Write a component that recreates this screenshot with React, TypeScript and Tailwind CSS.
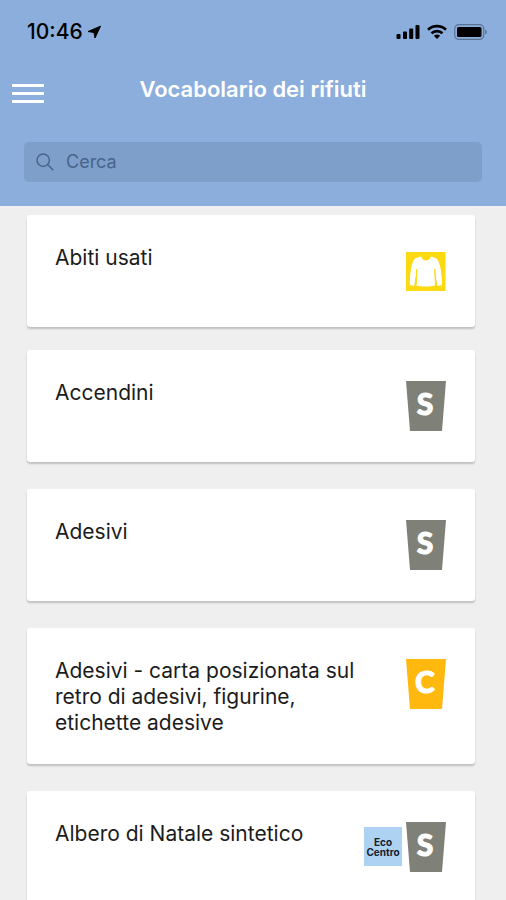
import type { ReactNode } from 'react'

type Marker = 'clothes' | 'dry' | 'paper' | 'ecocenter'

interface WasteItem {
  name: string
  markers: Marker[]
}

const items: WasteItem[] = [
  { name: 'Abiti usati', markers: ['clothes'] },
  { name: 'Accendini', markers: ['dry'] },
  { name: 'Adesivi', markers: ['dry'] },
  { name: 'Adesivi - carta posizionata sul retro di adesivi, figurine, etichette adesive', markers: ['paper'] },
  { name: 'Albero di Natale sintetico', markers: ['ecocenter', 'dry'] },
]

const Bin = ({ color, letter }: { color: string; letter: string }) => (
  <svg width="40" height="51" viewBox="0 0 40 51" fill={color} role="img" aria-label={`Bidone ${letter}`}>
    <path d="M0 1H40L36 51H4Z" />
    <text
      x="19"
      y="35"
      textAnchor="middle"
      fill="#fff"
      stroke="#fff"
      strokeWidth="1"
      className="font-[Lato,sans-serif] text-[30px] font-black"
    >
      {letter}
    </text>
  </svg>
)

const Clothes = () => (
  <svg width="40" height="40" viewBox="0 0 40 40" role="img" aria-label="Abiti">
    <path d="M0 1H39.500V40H0Z" fill="#fdd90f" />
    <path
      d="M14.500 5.500C16 6 16 9.500 20 9.500C24 9.500 24 6 25.500 5.500L30.500 7.500C34 10 36 23 36 34L31.300 35L28.500 18L29 34.500C24 35.800 16 35.800 10.500 34.500L11 18L8.200 35L3.800 34C3.800 23 5.500 10 9 7.500Z"
      fill="#fff"
    />
    <path d="M10.800 18L10 33M28.800 18L29.800 33" stroke="#fdd90f" strokeWidth="1.200" />
  </svg>
)

const EcoCenter = () => (
  <span className="flex h-[39px] w-[38px] items-center justify-center bg-[#aed2f2] text-center font-[Inter,sans-serif] text-[10px] leading-[10px] font-bold text-[#16202c]">
    Eco Centro
  </span>
)

const markerIcons: Record<Marker, ReactNode> = {
  clothes: <Clothes />,
  dry: <Bin color="#7f8077" letter="S" />,
  paper: <Bin color="#ffb80e" letter="C" />,
  ecocenter: <EcoCenter />,
}

const StatusBar = () => (
  <div className="flex h-16 items-center justify-between pr-[18px] pl-[27px] text-black">
    <div className="flex items-center gap-1">
      <span className="text-[21px] leading-6 font-medium">10:46</span>
      <svg width="15" height="15" viewBox="0 0 15 15" aria-hidden="true">
        <path d="M13.500 1.200L8 13L7 7.500L1 6.500Z" stroke="#000" strokeLinejoin="round" />
      </svg>
    </div>
    <div className="flex items-center gap-[7px]">
      <svg width="24" height="16" viewBox="0 0 24 16" aria-hidden="true">
        <rect x="0.500" y="10" width="4" height="5" rx="1" />
        <rect x="7" y="7.500" width="4" height="7.500" rx="1" />
        <rect x="13.200" y="4.500" width="4" height="10.500" rx="1" />
        <rect x="19.500" y="1" width="4" height="14" rx="1" />
      </svg>
      <svg width="20" height="16" viewBox="0 0 20 16" fill="none" stroke="#000" strokeWidth="2.600" aria-hidden="true">
        <path d="M1 5.800C6 0.900 14 0.900 19 5.800" />
        <path d="M4.500 9.300C7.500 6.400 12.500 6.400 15.500 9.300" />
        <path d="M6.900 11.800C8.700 10.200 11.300 10.200 13.100 11.800L10 15Z" fill="#000" stroke="none" />
      </svg>
      <svg width="34" height="16" viewBox="0 0 34 16" aria-hidden="true">
        <rect x="0.700" y="0.700" width="29" height="14.600" rx="4" fill="none" stroke="#5b7191" strokeWidth="1.200" />
        <rect x="3" y="3" width="24.500" height="10" rx="1.500" />
        <path d="M31.300 5.500C33.500 6.200 33.500 9.800 31.300 10.500Z" fill="#5b7191" />
      </svg>
    </div>
  </div>
)

const WasteCard = ({ name, markers }: WasteItem) => (
  <li className="mb-[27px] flex min-h-28 items-start justify-between gap-4 rounded-[3px] bg-white pt-[30px] pr-[29px] pb-7 pl-7 shadow-[0_2px_2px_rgba(0,0,0,0.2)] first:mb-[23px]">
    <p className="max-w-80 text-[21px] leading-[26px] text-[#1c1c1c]">{name}</p>
    <div className="flex h-[51px] shrink-0 items-center gap-1">
      {markers.map((marker) => (
        <span key={marker}>{markerIcons[marker]}</span>
      ))}
    </div>
  </li>
)

export default function App() {
  return (
    <div className="min-h-screen bg-[#efefef] font-[Inter,sans-serif]">
      <header className="bg-[#8caedd] pb-6">
        <StatusBar />
        <div className="grid h-[50px] grid-cols-[32px_1fr_32px] items-center px-3">
          <button type="button" aria-label="Menu" className="flex flex-col gap-[5px] pt-2">
            <span className="h-[3px] w-full bg-white" />
            <span className="h-[3px] w-full bg-white" />
            <span className="h-[3px] w-full bg-white" />
          </button>
          <h1 className="text-center text-[22px] leading-7 font-semibold text-white">Vocabolario dei rifiuti</h1>
        </div>
        <label className="mx-6 mt-7 flex h-10 items-center gap-3 rounded-[5px] bg-[#7e9fca] pl-3 text-[#48648c]">
          <svg width="18" height="18" viewBox="0 0 18 18" fill="none" stroke="currentColor" strokeWidth="1.500" aria-hidden="true">
            <circle cx="7.200" cy="7.200" r="6.200" />
            <path d="M11.800 11.800L17.300 17.300" />
          </svg>
          <input
            type="search"
            placeholder="Cerca"
            aria-label="Cerca"
            className="min-w-0 flex-1 bg-transparent text-[18px] leading-6 outline-none placeholder:text-[#48648c]"
          />
        </label>
      </header>
      <main className="pt-[9px] pr-[31px] pl-[27px]">
        <ul>
          {items.map((item) => (
            <WasteCard key={item.name} {...item} />
          ))}
        </ul>
      </main>
    </div>
  )
}
